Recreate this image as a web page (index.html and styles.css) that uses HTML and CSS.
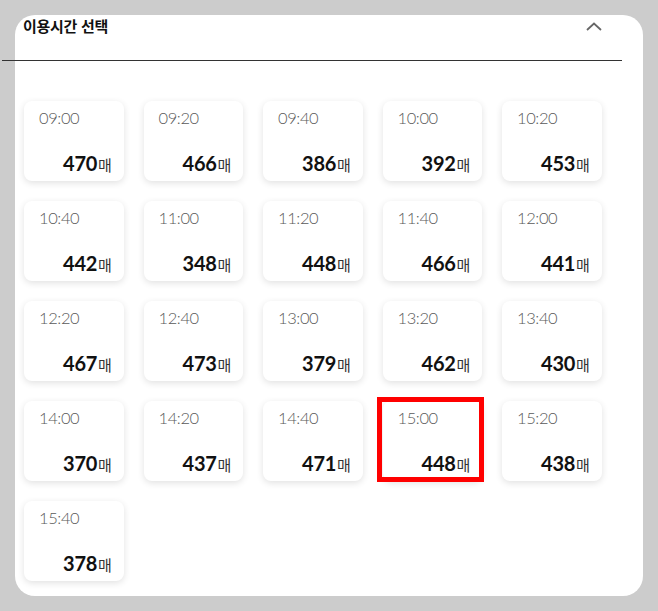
FILE: index.html
```html
<!DOCTYPE html>
<html lang="ko">
<head>
    <meta charset="UTF-8">
    <meta name="viewport" content="width=device-width, initial-scale=1.0">
    <title>이용시간 선택</title>
    <link rel="stylesheet" href="styles.css">
</head>
<body>
    <div class="panel">
        <div class="panel-header">
            <h2>이용시간 선택</h2>
            <svg class="toggle" width="16" height="9" viewBox="0 0 16 9">
                <polyline points="1,8 8,1.5 15,8" fill="none" stroke="#666" stroke-width="1.8"/>
            </svg>
        </div>

        <div class="time-list">
            <div class="time-card"><span class="time">09:00</span><span class="count">470<em>매</em></span></div>
            <div class="time-card"><span class="time">09:20</span><span class="count">466<em>매</em></span></div>
            <div class="time-card"><span class="time">09:40</span><span class="count">386<em>매</em></span></div>
            <div class="time-card"><span class="time">10:00</span><span class="count">392<em>매</em></span></div>
            <div class="time-card"><span class="time">10:20</span><span class="count">453<em>매</em></span></div>

            <div class="time-card"><span class="time">10:40</span><span class="count">442<em>매</em></span></div>
            <div class="time-card"><span class="time">11:00</span><span class="count">348<em>매</em></span></div>
            <div class="time-card"><span class="time">11:20</span><span class="count">448<em>매</em></span></div>
            <div class="time-card"><span class="time">11:40</span><span class="count">466<em>매</em></span></div>
            <div class="time-card"><span class="time">12:00</span><span class="count">441<em>매</em></span></div>

            <div class="time-card"><span class="time">12:20</span><span class="count">467<em>매</em></span></div>
            <div class="time-card"><span class="time">12:40</span><span class="count">473<em>매</em></span></div>
            <div class="time-card"><span class="time">13:00</span><span class="count">379<em>매</em></span></div>
            <div class="time-card"><span class="time">13:20</span><span class="count">462<em>매</em></span></div>
            <div class="time-card"><span class="time">13:40</span><span class="count">430<em>매</em></span></div>

            <div class="time-card"><span class="time">14:00</span><span class="count">370<em>매</em></span></div>
            <div class="time-card"><span class="time">14:20</span><span class="count">437<em>매</em></span></div>
            <div class="time-card"><span class="time">14:40</span><span class="count">471<em>매</em></span></div>
            <div class="time-card selected"><span class="time">15:00</span><span class="count">448<em>매</em></span></div>
            <div class="time-card"><span class="time">15:20</span><span class="count">438<em>매</em></span></div>

            <div class="time-card"><span class="time">15:40</span><span class="count">378<em>매</em></span></div>
        </div>
    </div>
</body>
</html>
```

FILE: styles.css
```css
body {
    margin: 0;
    padding: 15px;
    background-color: #cccccc;
    font-family: Lato, "Noto Sans CJK KR", sans-serif;
}
.panel {
    width: 628px;
    box-sizing: border-box;
    background-color: #fff;
    border-radius: 20px;
    padding: 0 0 15px 9px;
}
.panel-header {
    display: flex;
    justify-content: space-between;
    align-items: flex-start;
    height: 45px;
    margin: 0 21px 0 -22px;
    padding: 0 21px;
    border-bottom: 1px solid #333;
}
.panel-header h2 {
    margin: 0;
    font-family: "Noto Sans CJK KR", sans-serif;
    font-size: 15px;
    line-height: 22px;
    font-weight: 700;
    letter-spacing: -0.3px;
    color: #111;
}
.toggle {
    margin-top: 7px;
    margin-right: -1px;
}
.time-list {
    display: grid;
    grid-template-columns: repeat(5, 99.5px);
    grid-auto-rows: 80px;
    gap: 20px;
    margin-top: 40px;
}
.time-card {
    position: relative;
    display: flex;
    flex-direction: column;
    justify-content: space-between;
    padding: 7px 12px 4px 15px;
    background-color: #fff;
    border-radius: 8px;
    box-shadow: 0 2px 7px rgba(0,0,0,0.12);
}
.time-card .time {
    font-size: 16.5px;
    line-height: 20px;
    font-weight: 300;
    letter-spacing: -0.4px;
    color: #5a5a5a;
}
.time-card .count {
    align-self: flex-end;
    font-size: 20px;
    line-height: 24px;
    font-weight: 700;
    letter-spacing: -0.3px;
    color: #111;
}
.time-card .count em {
    font-style: normal;
    font-family: "Noto Sans CJK KR", sans-serif;
    font-size: 15px;
    font-weight: 400;
    color: #333;
    margin-left: 1px;
}
.time-card.selected::after {
    content: "";
    position: absolute;
    top: -4px;
    left: -6px;
    right: -2px;
    bottom: -1px;
    border: 5px solid #ff0000;
}
```
